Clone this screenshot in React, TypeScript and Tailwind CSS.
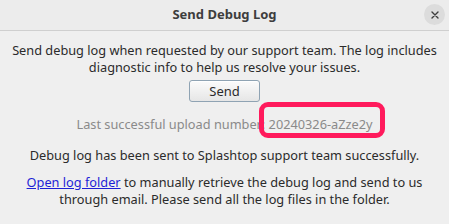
import React from 'react';

const App: React.FC = () => {
  return (
    <div
      className="relative w-[449px] h-[224px] overflow-hidden bg-[#5a2a3c]"
      style={{ fontFamily: '"Noto Sans", "Open Sans", sans-serif' }}
    >
      <div className="w-full h-full rounded-tl-[6px] rounded-tr-[6px] bg-[#efefef] flex flex-col">
        {/* Title bar */}
        <div className="relative h-[31px] shrink-0 flex items-center justify-center border-b border-[#cfcfcf] bg-[#ececec]">
          <span className="text-[13px] font-bold text-[#3d3d3d]">Send Debug Log</span>
          <button className="absolute right-[4px] top-[4px] w-[21px] h-[21px] rounded-full bg-[#dcdcdc] flex items-center justify-center">
            <svg width="8" height="8" viewBox="0 0 8 8" fill="none" stroke="#3d3d3d" strokeWidth="1.4" strokeLinecap="round">
              <path d="M1 1 L7 7 M7 1 L1 7" />
            </svg>
          </button>
        </div>

        {/* Body */}
        <div className="flex flex-col items-center text-[12.75px] leading-[17px] text-[#2b2b2b] text-center pt-[11px]">
          <p>
            Send debug log when requested by our support team. The log includes
            <br />
            diagnostic info to help us resolve your issues.
          </p>
          <button className="mt-[4px] w-[71px] h-[22px] rounded-[3px] border border-[#8fa3b3] bg-gradient-to-b from-[#fbfbfb] to-[#e6e6e6] text-[13px] text-[#2b2b2b] flex items-center justify-center shadow-[inset_0_1px_0_#ffffff]">
            Send
          </button>
          <p className="mt-[14px] text-[#8a8a8a]">
            Last successful upload number: 20240326-aZze2y
          </p>
          <p className="mt-[14px]">Debug log has been sent to Splashtop support team successfully.</p>
          <p className="mt-[10px]">
            <a href="#" className="text-[#1f1fd6] underline">Open log folder</a> to manually retrieve the debug log and send to us
            <br />
            through email. Please send all the log files in the folder.
          </p>
        </div>
      </div>

      {/* Annotation highlight */}
      <div className="absolute left-[259px] top-[102px] w-[126px] h-[36px] rounded-[9px] border-[5px] border-[#ff1a5c]" />
    </div>
  );
};

export default App;
